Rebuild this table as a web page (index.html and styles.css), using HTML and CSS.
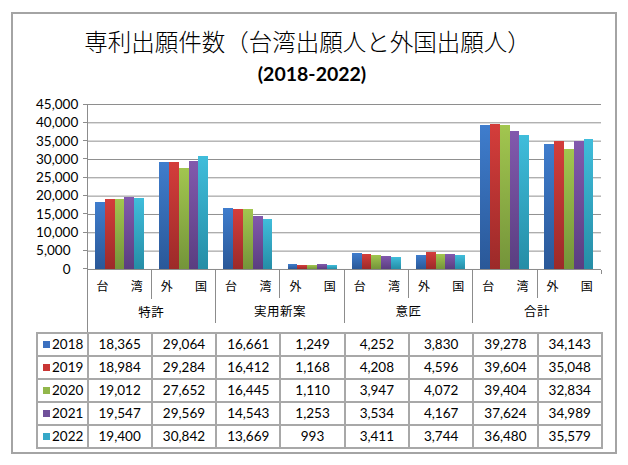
FILE: index.html
```html
<!DOCTYPE html>
<html lang="ja">
<head>
<meta charset="utf-8">
<title>専利出願件数</title>
<link rel="stylesheet" href="styles.css">
</head>
<body>
<div class="frame">
  <div class="title">専利出願件数（台湾出願人と外国出願人）</div>
  <div class="subtitle">(2018-2022)</div>
  <div class="chart">
    <div class="plotrow">
      <div class="yaxis">
        <div class="ylab">45,000</div>
        <div class="ylab">40,000</div>
        <div class="ylab">35,000</div>
        <div class="ylab">30,000</div>
        <div class="ylab">25,000</div>
        <div class="ylab">20,000</div>
        <div class="ylab">15,000</div>
        <div class="ylab">10,000</div>
        <div class="ylab">5,000</div>
        <div class="ylab">0</div>
      </div>
      <div class="plot">
        <div class="cat"><div class="bar s1" style="height:67.34px"></div><div class="bar s2" style="height:69.61px"></div><div class="bar s3" style="height:69.71px"></div><div class="bar s4" style="height:71.67px"></div><div class="bar s5" style="height:71.13px"></div></div>
        <div class="cat"><div class="bar s1" style="height:106.57px"></div><div class="bar s2" style="height:107.37px"></div><div class="bar s3" style="height:101.39px"></div><div class="bar s4" style="height:108.42px"></div><div class="bar s5" style="height:113.09px"></div></div>
        <div class="cat"><div class="bar s1" style="height:61.09px"></div><div class="bar s2" style="height:60.18px"></div><div class="bar s3" style="height:60.30px"></div><div class="bar s4" style="height:53.32px"></div><div class="bar s5" style="height:50.12px"></div></div>
        <div class="cat"><div class="bar s1" style="height:4.58px"></div><div class="bar s2" style="height:4.28px"></div><div class="bar s3" style="height:4.07px"></div><div class="bar s4" style="height:4.59px"></div><div class="bar s5" style="height:3.64px"></div></div>
        <div class="cat"><div class="bar s1" style="height:15.59px"></div><div class="bar s2" style="height:15.43px"></div><div class="bar s3" style="height:14.47px"></div><div class="bar s4" style="height:12.96px"></div><div class="bar s5" style="height:12.51px"></div></div>
        <div class="cat"><div class="bar s1" style="height:14.04px"></div><div class="bar s2" style="height:16.85px"></div><div class="bar s3" style="height:14.93px"></div><div class="bar s4" style="height:15.28px"></div><div class="bar s5" style="height:13.73px"></div></div>
        <div class="cat"><div class="bar s1" style="height:144.02px"></div><div class="bar s2" style="height:145.21px"></div><div class="bar s3" style="height:144.48px"></div><div class="bar s4" style="height:137.95px"></div><div class="bar s5" style="height:133.76px"></div></div>
        <div class="cat"><div class="bar s1" style="height:125.19px"></div><div class="bar s2" style="height:128.51px"></div><div class="bar s3" style="height:120.39px"></div><div class="bar s4" style="height:128.29px"></div><div class="bar s5" style="height:130.46px"></div></div>
      </div>
    </div>
    <div class="xaxis">
      <div class="group">
        <div class="subs"><div class="sub"><span>台</span><span>湾</span></div><div class="sub"><span>外</span><span>国</span></div></div>
        <div class="gname">特許</div>
      </div>
      <div class="group">
        <div class="subs"><div class="sub"><span>台</span><span>湾</span></div><div class="sub"><span>外</span><span>国</span></div></div>
        <div class="gname">実用新案</div>
      </div>
      <div class="group">
        <div class="subs"><div class="sub"><span>台</span><span>湾</span></div><div class="sub"><span>外</span><span>国</span></div></div>
        <div class="gname">意匠</div>
      </div>
      <div class="group">
        <div class="subs"><div class="sub"><span>台</span><span>湾</span></div><div class="sub"><span>外</span><span>国</span></div></div>
        <div class="gname">合計</div>
      </div>
      <div class="endtick"></div>
    </div>
    <table class="data">
      <colgroup><col class="c-year"><col><col><col><col><col><col><col><col></colgroup>
      <tbody>
        <tr><td class="year"><span class="key k1"></span>2018</td><td>18,365</td><td>29,064</td><td>16,661</td><td>1,249</td><td>4,252</td><td>3,830</td><td>39,278</td><td>34,143</td></tr>
        <tr><td class="year"><span class="key k2"></span>2019</td><td>18,984</td><td>29,284</td><td>16,412</td><td>1,168</td><td>4,208</td><td>4,596</td><td>39,604</td><td>35,048</td></tr>
        <tr><td class="year"><span class="key k3"></span>2020</td><td>19,012</td><td>27,652</td><td>16,445</td><td>1,110</td><td>3,947</td><td>4,072</td><td>39,404</td><td>32,834</td></tr>
        <tr><td class="year"><span class="key k4"></span>2021</td><td>19,547</td><td>29,569</td><td>14,543</td><td>1,253</td><td>3,534</td><td>4,167</td><td>37,624</td><td>34,989</td></tr>
        <tr><td class="year"><span class="key k5"></span>2022</td><td>19,400</td><td>30,842</td><td>13,669</td><td>993</td><td>3,411</td><td>3,744</td><td>36,480</td><td>35,579</td></tr>
      </tbody>
    </table>
  </div>
</div>
</body>
</html>
```
FILE: styles.css
```css
html, body {
  margin: 0;
  padding: 0;
  background: #ffffff;
}

body {
  font-family: Lato, "Liberation Sans", "Noto Sans CJK JP", sans-serif;
  color: #000;
}

.frame {
  margin: 12px 0 0 11px;
  width: 606px;
  height: 442px;
  box-sizing: border-box;
  border: 2px solid #a4a4a4;
  padding-top: 13px;
}

.title {
  font-family: "Noto Sans CJK JP", sans-serif;
  font-weight: 300;
  font-size: 23.5px;
  line-height: 28px;
  text-align: center;
  padding-right: 13px;
}

.subtitle {
  margin-top: 6.5px;
  font-family: Lato, "Liberation Sans", sans-serif;
  font-weight: bold;
  font-size: 19.5px;
  line-height: 24px;
  text-align: center;
  padding-right: 4px;
}

.chart {
  margin: 18.5px 0 0 23px;
  width: 565px;
}

.plotrow {
  display: flex;
  align-items: flex-start;
}

.yaxis {
  width: 50.5px;
  flex: none;
  margin: -9.1667px 0;
  display: flex;
  flex-direction: column;
}

.ylab {
  height: 18.3333px;
  line-height: 18.3333px;
  font-size: 13.5px;
  text-align: right;
  padding-right: 16px;
  white-space: nowrap;
  background: linear-gradient(#8c8c8c, #8c8c8c) no-repeat right center / 4px 1px;
}

.plot {
  width: 514.5px;
  height: 166px;
  box-sizing: border-box;
  flex: none;
  border-left: 1px solid #8c8c8c;
  border-bottom: 1px solid #8c8c8c;
  display: flex;
  background-image: linear-gradient(to bottom, #8c8c8c 0, #8c8c8c 1px, transparent 1px);
  background-size: 100% 18.3333px;
}

.cat {
  flex: 1;
  display: flex;
  align-items: flex-end;
  justify-content: center;
}

.bar {
  width: 9.8px;
}

.s1 { background: linear-gradient(to bottom, #3f7dcd, #2a5898); }
.s2 { background: linear-gradient(to bottom, #d43d3b, #9c2a29); }
.s3 { background: linear-gradient(to bottom, #a2c64f, #74943a); }
.s4 { background: linear-gradient(to bottom, #8259ad, #5a3e80); }
.s5 { background: linear-gradient(to bottom, #40bddb, #258da6); }

.xaxis {
  display: flex;
  align-items: flex-start;
  margin-left: 50.5px;
  height: 62px;
  font-family: "Noto Sans CJK JP", sans-serif;
  font-size: 12px;
}

.group {
  width: 128.6px;
  flex: none;
  height: 53px;
  box-sizing: border-box;
  border-left: 1px solid #8c8c8c;
  display: flex;
  flex-direction: column;
}

.group:first-child {
  height: 62px;
}

.subs {
  display: flex;
  height: 29px;
}

.sub {
  flex: 1;
  display: flex;
  justify-content: space-between;
  align-items: flex-start;
  padding: 8px 8px 0 9px;
  line-height: 16px;
}

.sub + .sub {
  border-left: 1px solid #8c8c8c;
}

.gname {
  text-align: center;
  line-height: 24px;
  padding-top: 1px;
  font-size: 12.5px;
  letter-spacing: 0.5px;
}

.endtick {
  width: 0;
  height: 4px;
  border-left: 1px solid #8c8c8c;
}

.data {
  border-collapse: collapse;
  table-layout: fixed;
  width: 565px;
  font-size: 13.5px;
}

.data col {
  width: 64.3px;
}

.data col.c-year {
  width: 50.5px;
}

.data td {
  border: 2px solid #a8a8a8;
  height: 21px;
  padding: 0;
  text-align: center;
  line-height: 21px;
  white-space: nowrap;
}

.data td.year {
  text-align: left;
  padding-left: 5px;
}

.key {
  display: inline-block;
  width: 7px;
  height: 7px;
  margin-right: 2px;
  vertical-align: 1px;
}

.k1 { background: #3b70c0; }
.k2 { background: #c93634; }
.k3 { background: #92b74b; }
.k4 { background: #70509a; }
.k5 { background: #36a8c8; }
```
